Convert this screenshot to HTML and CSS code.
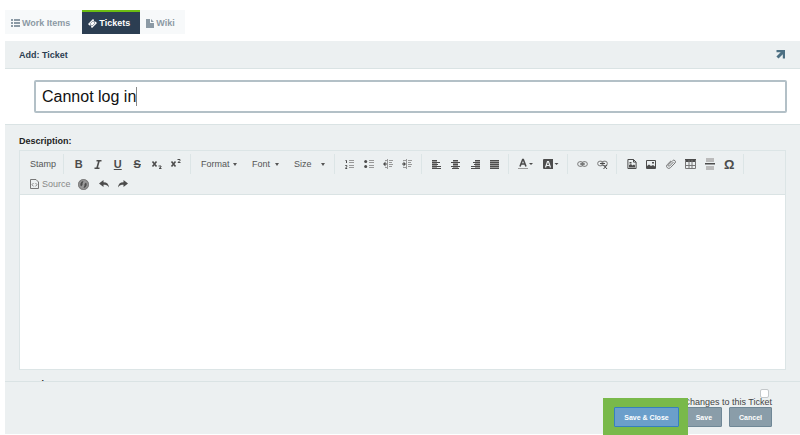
FILE: index.html
```html
<!DOCTYPE html>
<html lang="en">
<head>
    <meta charset="UTF-8">
    <meta name="viewport" content="width=device-width, initial-scale=1.0">
    <title>Add: Ticket</title>
    <link rel="stylesheet" href="styles.css">
</head>
<body>
<div class="page">
    <nav class="tabs">
        <a class="tab" href="#items">
            <svg width="9" height="8" viewBox="0 0 9 8"><path d="M0 0h2v2H0zM3 0h6v2H3zM0 3h2v2H0zM3 3h6v2H3zM0 6h2v2H0zM3 6h6v2H3z"/></svg>
            Work Items
        </a>
        <a class="tab active" href="#tickets">
            <svg width="9" height="9" viewBox="0 0 9 9"><path d="M5 0l1 1a1 1 0 0 0 1.400 1.400L9 4 4 9 3 8a1 1 0 0 0-1.500-1.400L0 5z"/><path d="M4.900 2L7 4.100 4.100 7 2 4.900z" fill="none" stroke="#2c3e52" stroke-width=".5"/></svg>
            Tickets
        </a>
        <a class="tab" href="#wiki">
            <svg width="8" height="9" viewBox="0 0 8 9"><path d="M0 0h4v4h4v5H0zM5 0l3 3H5z"/></svg>
            Wiki
        </a>
    </nav>

    <header class="panel-header">
        <h1>Add: Ticket</h1>
        <a class="expand" href="#expand" aria-label="Open in new window">
            <svg width="9" height="9" viewBox="0 0 9 9"><path d="M.5 0H9v8.500H6.800V4.300L2.500 8.600.4 6.500l4.300-4.200H.5z"/></svg>
        </a>
    </header>

    <div class="title-row">
        <div class="title-box">
            <input class="title-input" type="text" value="Cannot log in" aria-label="Ticket title">
            <span class="caret"></span>
        </div>
    </div>

    <main class="fields">
        <label class="field-label" for="description">Description:</label>
        <div class="editor">
            <div class="toolbar">
                <div class="group stamp"><button class="text-btn">Stamp</button></div>
                <div class="group six">
                    <button class="bold" aria-label="Bold">B</button>
                    <button class="italic" aria-label="Italic"><svg width="8" height="9" viewBox="0 0 8 9"><path class="thick" d="M2.500.8h5M.5 8.200h5M5 1L3 8"/></svg></button>
                    <button class="under" aria-label="Underline">U</button>
                    <button class="strike" aria-label="Strikethrough">S</button>
                    <button aria-label="Subscript"><svg width="12" height="12" viewBox="0 0 12 12"><path class="thick" d="M1.500 3.500l4 5M5.500 3.500l-4 5"/><path class="line" d="M7.500 8h2.500v1L8 10.500h2.500"/></svg></button>
                    <button aria-label="Superscript"><svg width="12" height="12" viewBox="0 0 12 12"><path class="thick" d="M1.500 3.500l4 5M5.500 3.500l-4 5"/><path class="line" d="M7.500 1.500H10v1L8 4.500h2.500"/></svg></button>
                </div>
                <div class="group combos">
                    <span class="combo format"><select aria-label="Format"><option>Format</option></select></span>
                    <span class="combo font"><select aria-label="Font"><option>Font</option></select></span>
                    <span class="combo size"><select aria-label="Size"><option>Size</option></select></span>
                </div>
                <div class="group four">
                    <button aria-label="Numbered list"><svg width="10" height="10" viewBox="0 0 10 10"><path class="line" d="M.5 1.500h1V4M.3 6.500h1.500v1L.5 9.500h1.700"/><path class="soft" d="M4 1h5v1H4zM4 3h5v1H4zM4 6h5v1H4zM4 8h5v1H4z"/></svg></button>
                    <button aria-label="Bulleted list"><svg width="10" height="10" viewBox="0 0 10 10"><circle cx="1.700" cy="2.500" r="1.500"/><circle cx="1.700" cy="7.500" r="1.500"/><path class="soft" d="M5 1h5v1H5zM5 3h5v1H5zM5 6h5v1H5zM5 8h5v1H5z"/></svg></button>
                    <button aria-label="Decrease indent"><svg width="10" height="10" viewBox="0 0 10 10"><path d="M0 5l2.500-2.500v2H4v1H2.500v2z"/><path class="soft" d="M4 0h1v10H4zM6 1h4v1H6zM6 3h3v1H6zM6 5h4v1H6zM6 7h3v1H6zM2 1h2v1H2zM2 8h2v1H2z"/></svg></button>
                    <button aria-label="Increase indent"><svg width="10" height="10" viewBox="0 0 10 10"><path d="M4 5L1.500 2.500v2H0v1h1.500v2z"/><path class="soft" d="M4 0h1v10H4zM6 1h4v1H6zM6 3h3v1H6zM6 5h4v1H6zM6 7h3v1H6zM1 1h3v1H1zM1 8h3v1H1z"/></svg></button>
                </div>
                <div class="group four">
                    <button aria-label="Align left"><svg width="9" height="9" viewBox="0 0 9 9"><path class="soft" d="M0 1h5v8H0z"/><path d="M0 0h5v1H0zM0 2h8v1H0zM0 4h6v1H0zM0 6h9v1H0zM0 8h9v1H0z"/></svg></button>
                    <button aria-label="Center"><svg width="9" height="9" viewBox="0 0 9 9"><path class="soft" d="M2 1h5v8H2z"/><path d="M2 0h5v1H2zM0 2h9v1H0zM2 4h5v1H2zM0 6h9v1H0zM1 8h7v1H1z"/></svg></button>
                    <button aria-label="Align right"><svg width="9" height="9" viewBox="0 0 9 9"><path class="soft" d="M4 1h5v8H4z"/><path d="M4 0h5v1H4zM2 2h7v1H2zM3 4h6v1H3zM0 6h9v1H0zM0 8h9v1H0z"/></svg></button>
                    <button aria-label="Justify"><svg width="9" height="9" viewBox="0 0 9 9"><path class="soft" d="M0 0h9v9H0z"/><path d="M0 0h9v1H0zM0 2h9v1H0zM0 4h9v1H0zM0 6h9v1H0zM0 8h9v1H0z"/></svg></button>
                </div>
                <div class="group colors">
                    <button aria-label="Text color"><svg width="16" height="12" viewBox="0 0 16 12"><path class="thick" d="M2 8.500l2.700-7h.6L8 8.500M3 6h4"/><path class="soft" d="M0 10h10v1H0z"/><path d="M11 5h4l-2 2z"/></svg></button>
                    <button aria-label="Background color"><svg width="16" height="12" viewBox="0 0 16 12"><path d="M1 1h9v10H1a1 1 0 0 1-1-1V2a1 1 0 0 1 1-1zM11.500 5h4l-2 2z"/><path d="M2.500 9.500l2-6h1l2 6M3.500 7.500h3" fill="none" stroke="#ecf0f1" stroke-width="1.200"/></svg></button>
                </div>
                <div class="group two">
                    <button aria-label="Link"><svg width="11" height="6" viewBox="0 0 11 6"><rect class="gray" x=".7" y=".7" width="5.500" height="4.600" rx="2.200"/><rect class="gray" x="4.800" y=".7" width="5.500" height="4.600" rx="2.200"/><path d="M3 2.500h5v1H3z"/></svg></button>
                    <button aria-label="Unlink"><svg width="11" height="10" viewBox="0 0 11 10"><rect class="gray" x=".7" y="2.200" width="5.500" height="4.600" rx="2.200"/><rect class="gray" x="4.800" y="2.200" width="5.500" height="4.600" rx="2.200"/><path d="M3 4h5v1H3z"/><path class="line" d="M6.500 6l3.500 4M10 6l-3.500 4"/></svg></button>
                </div>
                <div class="group six">
                    <button aria-label="Insert file image"><svg width="10" height="10" viewBox="0 0 10 10"><path class="line" d="M.9.5h5.600l2.600 2.600v6.400H.9zM6.500.5v2.600h2.600"/><path d="M2 8.500V6l2-1 1.500 1.500L7 5.500l1 1v2zM2.500 3h2v1.500h-2z"/></svg></button>
                    <button aria-label="Image"><svg width="10" height="9" viewBox="0 0 10 9"><path class="line" d="M.5.5h9v8h-9z"/><path d="M1 8V6l2-1.500 2 1.500 2-1 2 1.500V8zM6 2h2v1.500H6z"/></svg></button>
                    <button aria-label="Attach file"><svg width="10" height="10" viewBox="0 0 10 10"><path class="gray" d="M7.500 3L3.600 7a.8.8 0 0 1-1.200-1.100l4.200-4.200a1.600 1.600 0 0 1 2.400 2.300L4.400 8.700A2.200 2.200 0 0 1 1.200 5.600L5 1.800"/></svg></button>
                    <button aria-label="Table"><svg width="11" height="10" viewBox="0 0 11 10"><path d="M0 0h11v3H0z"/><path class="gray" d="M.5 1v8.500h10V1M4 1v8.500M7 1v8.500M0 6.500h11"/></svg></button>
                    <button aria-label="Horizontal line"><svg width="10" height="12" viewBox="0 0 10 12"><path d="M0 5h10v1.500H0z"/><path class="light" d="M1 0h8v4H1zM1 8h8v4H1z"/></svg></button>
                    <button class="omega" aria-label="Special character">Ω</button>
                </div>
                <div class="row-break"></div>
                <div class="group source">
                    <button class="text-btn"><svg width="9" height="10" viewBox="0 0 9 10"><path class="gray" d="M.5.5H6L8.500 3v6.500h-8z"/><path class="line" d="M3.500 4L2 5.700l1.500 1.700M5.500 4L7 5.700 5.500 7.400"/></svg>Source</button>
                </div>
                <div class="group tools">
                    <button aria-label="Embed"><svg width="11" height="11" viewBox="0 0 11 11"><circle class="soft" cx="5.500" cy="5.500" r="5.500"/><circle class="gray" cx="5.500" cy="5.500" r="4.900"/><path d="M5.500 2A3.500 3.500 0 0 0 3 7.500L4.500 6V4.500zM5.500 9A3.500 3.500 0 0 0 8 3.500L6.500 5v1.500z"/></svg></button>
                    <button aria-label="Undo"><svg width="10" height="8" viewBox="0 0 10 8"><path d="M0 3.500L4.500 0v2.200C8 2.200 9.700 4 10 7.500 8.500 5.300 7 4.800 4.500 4.800V7z"/></svg></button>
                    <button aria-label="Redo"><svg width="10" height="8" viewBox="0 0 10 8"><path d="M10 3.500L5.500 0v2.200C2 2.200.3 4 0 7.500c1.500-2.200 3-2.700 5.500-2.700V7z"/></svg></button>
                </div>
            </div>
            <textarea class="editor-body" id="description"></textarea>
        </div>
        <div class="field-label next-field">Attachments:</div>
    </main>

    <footer class="footer">
        <label class="notify" for="notify">
            <input type="checkbox" id="notify">
            Changes to this Ticket
        </label>
        <div class="actions">
            <span class="highlight"><button class="btn primary">Save &amp; Close</button></span>
            <button class="btn">Save</button>
            <button class="btn">Cancel</button>
        </div>
    </footer>
</div>
</body>
</html>
```

FILE: styles.css
```css
* {
    box-sizing: border-box;
}

body {
    margin: 0;
    font-family: "Liberation Sans", Arial, sans-serif;
    font-size: 9px;
    color: #2c3e52;
    background-color: #fff;
}

button, input, select, textarea {
    font-family: inherit;
    font-size: inherit;
    margin: 0;
}

svg {
    fill: currentColor;
    flex: none;
}

.page {
    display: flex;
    flex-direction: column;
    height: 100vh;
    padding: 10px 0 1px 5px;
    overflow: hidden;
}

/* Tabs */
.tabs {
    display: flex;
    height: 24px;
    margin-bottom: 7px;
    flex: none;
}

.tab {
    display: flex;
    align-items: center;
    gap: 2px;
    padding: 2px 10px 0 6px;
    background-color: #f7f9fa;
    color: #8c9aa5;
    font-weight: bold;
    text-decoration: none;
}

.tab:first-child {
    padding-right: 12px;
}

.tab.active {
    padding-top: 0;
    border-top: 2px solid #6cbd12;
    background-color: #2c3e52;
    color: #fff;
}

.panel-header {
    display: flex;
    align-items: center;
    justify-content: space-between;
    height: 28px;
    padding: 0 15px 0 14px;
    background-color: #ecf0f1;
    border-bottom: 1px solid #dae3e4;
    flex: none;
}

.panel-header h1 {
    margin: 0;
    font-size: 9px;
}

.expand {
    display: flex;
    color: #4d7083;
}

/* Title */
.title-row {
    padding: 11px 13px 11px 29px;
    flex: none;
}

.title-box {
    position: relative;
}

.title-input {
    display: block;
    width: 100%;
    height: 33px;
    padding: 1px 6px 0;
    border: 2px solid #b3c0c7;
    border-radius: 2px;
    outline: none;
    color: #111;
    font-size: 16px;
}

.caret {
    position: absolute;
    left: 102px;
    top: 7px;
    width: 1px;
    height: 19px;
    background-color: #888;
}

/* Description and editor */
.fields {
    flex: 1;
    min-height: 0;
    overflow: hidden;
    padding: 10px 14px 0;
    background-color: #ecf0f1;
    border-top: 1px solid #dae3e4;
}

.field-label {
    display: block;
    line-height: 12px;
    color: #222;
    font-weight: bold;
}

.editor {
    margin-top: 3px;
    border: 1px solid #dce5e6;
}

.toolbar {
    display: flex;
    flex-wrap: wrap;
    padding-top: 3px;
    color: #4c4c4c;
    border-bottom: 1px solid #dae3e4;
}

.group {
    display: flex;
    height: 20px;
    padding: 0 4px 0 5px;
    border-right: 1px solid #dce5e6;
}

.group button {
    display: flex;
    flex: 1;
    align-items: center;
    justify-content: center;
    padding: 0;
    border: none;
    background: none;
    color: inherit;
}

.stamp {
    width: 44px;
}

.six {
    width: 127px;
}

.combos {
    width: 144px;
    gap: 7px;
}

.four {
    width: 87px;
}

.colors {
    width: 59px;
}

.two {
    width: 49px;
}

.source {
    width: 54px;
    padding-right: 0;
    border: none;
}

.tools {
    width: 59px;
    padding: 0;
    border: none;
}

.row-break {
    width: 100%;
}

.group .text-btn {
    justify-content: flex-start;
    gap: 3px;
    padding-left: 5px;
    color: #555;
}

.source .text-btn {
    color: #888;
}

.group .bold,
.group .under,
.group .strike {
    font-size: 11px;
    font-weight: bold;
}

.group .under {
    text-decoration: underline;
}

.group .strike {
    text-decoration: line-through;
}

.group .omega {
    font-size: 13px;
    font-weight: bold;
}

.thick,
.line,
.gray {
    fill: none;
    stroke: currentColor;
}

.thick {
    stroke-width: 1.6;
}

.gray {
    stroke: #777;
}

.soft {
    fill: #999;
}

.light {
    fill: #bbb;
}

.combo {
    position: relative;
}

.combo select {
    width: 100%;
    height: 20px;
    padding: 0 0 0 5px;
    border: none;
    background: none;
    color: #555;
    appearance: none;
}

.combo::after {
    content: "";
    position: absolute;
    right: 3px;
    top: 9px;
    border: 2px solid transparent;
    border-top: 3px solid #555;
    border-bottom: none;
    pointer-events: none;
}

.format {
    width: 44px;
}

.font {
    width: 35px;
}

.size {
    width: 39px;
}

.editor-body {
    display: block;
    width: 100%;
    height: 174px;
    padding: 8px;
    border: none;
    outline: none;
    resize: none;
    background-color: #fff;
}

.next-field {
    margin-top: 8px;
}

/* Footer */
.footer {
    display: flex;
    flex-direction: column;
    align-items: flex-end;
    padding: 7px 28px 7px 0;
    background-color: #ecf0f1;
    border-top: 1px solid #dae3e4;
    flex: none;
}

.notify {
    display: flex;
    flex-direction: column;
    align-items: flex-end;
    line-height: 9px;
    color: #444;
}

.notify input {
    width: 9px;
    height: 9px;
    margin-right: 3px;
    border: 1px solid #c4c8ca;
    border-radius: 2px;
    background-color: #fff;
    appearance: none;
}

.actions {
    display: flex;
    gap: 7px;
}

.btn {
    position: relative;
    height: 20px;
    padding: 0 9px;
    border: 1px solid #6f8796;
    border-radius: 1px;
    background-color: #8a9da9;
    color: #fff;
    font-size: 7px;
    font-weight: bold;
}

.btn.primary {
    display: block;
    z-index: 2;
    background-color: #6b9fcb;
    border-color: #3680bf;
}

.highlight {
    position: relative;
    z-index: 1;
}

.highlight::before {
    content: "";
    position: absolute;
    inset: -9px -9px -8px -11px;
    background-color: #79b94a;
}
```
